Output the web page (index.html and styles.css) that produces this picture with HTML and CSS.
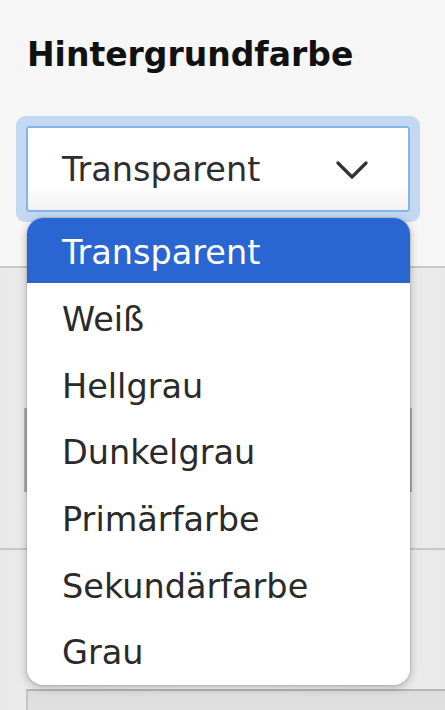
FILE: index.html
```html
<!DOCTYPE html>
<html lang="de">
<head>
<meta charset="utf-8">
<title>Hintergrundfarbe</title>
<link rel="stylesheet" href="styles.css">
</head>
<body>
<div class="page">
  <section class="top">
    <h2 class="label">Hintergrundfarbe</h2>
    <div class="select">
      <span class="select-value">Transparent</span>
      <svg class="chevron" width="32" height="20" viewBox="0 0 32 20"><path d="M2 3 L16 17 L30 3" fill="none" stroke="#333" stroke-width="3.2" stroke-linecap="round" stroke-linejoin="round"/></svg>
    </div>
  </section>
  <div class="rule"></div>
  <section class="middle">
    <div class="field"></div>
  </section>
  <div class="rule"></div>
  <section class="bottom">
    <div class="field2"></div>
  </section>
  <ul class="dropdown">
    <li class="opt active">Transparent</li>
    <li class="opt">Weiß</li>
    <li class="opt">Hellgrau</li>
    <li class="opt">Dunkelgrau</li>
    <li class="opt">Primärfarbe</li>
    <li class="opt">Sekundärfarbe</li>
    <li class="opt">Grau</li>
  </ul>
</div>
</body>
</html>
```
FILE: styles.css
```css
* { box-sizing: border-box; }
html, body { margin: 0; padding: 0; }
body {
  width: 445px;
  height: 710px;
  overflow: hidden;
  background: #eeeeee;
  font-family: "DejaVu Sans", Verdana, sans-serif;
  color: #333;
}
.page {
  position: relative;
  width: 445px;
  height: 710px;
}
.top {
  height: 266px;
  background: #f6f6f6;
  padding: 36px 0 0 27px;
}
.label {
  margin: 0;
  font-size: 33px;
  line-height: 38px;
  font-weight: bold;
  color: #111;
}
.select {
  margin: 52px 0 0 -1px;
  width: 384px;
  height: 86px;
  border: 2px solid #86b5ea;
  border-radius: 3px;
  background: linear-gradient(#ffffff 0%, #ffffff 70%, #f1f1f1 100%);
  box-shadow: 0 0 0 10px #c3d9f3;
  display: flex;
  align-items: center;
  justify-content: space-between;
  padding: 2px 40px 0 34px;
}
.select-value {
  font-size: 33.5px;
  line-height: 38px;
  color: #2e2e2e;
}
.chevron { display: block; margin-top: 0; }
.rule {
  height: 2px;
  background: #c8c8c8;
}
.middle {
  height: 280px;
  background: linear-gradient(90deg, #e9e9e9, #f1f1f1 40%, #f1f1f1 60%, #e9e9e9);
  padding-top: 140px;
}
.field {
  margin-left: 24px;
  width: 388px;
  height: 84px;
  border-left: 3px solid #b0b0b0;
  border-right: 3px solid #b0b0b0;
  background: #f4f4f4;
}
.bottom {
  height: 160px;
  background: linear-gradient(90deg, #e9e9e9, #f1f1f1 40%, #f1f1f1 60%, #e9e9e9);
  padding-top: 139px;
}
.field2 {
  margin-left: 26px;
  width: 420px;
  height: 40px;
  border-top: 2px solid #b5b5b5;
  border-left: 2px solid #c4c4c4;
  background: linear-gradient(#dcdcdc, #e6e6e6);
}
.dropdown {
  position: absolute;
  left: 27px;
  top: 218px;
  width: 383px;
  height: 467px;
  margin: 0;
  padding: 0;
  list-style: none;
  background: #fff;
  border-radius: 16px;
  overflow: hidden;
  box-shadow: 0 2px 8px rgba(0,0,0,0.28), 0 0 0 1px rgba(0,0,0,0.08);
}
.opt {
  height: 66.7px;
  display: flex;
  align-items: center;
  padding: 7px 0 0 35px;
  font-size: 33.5px;
  line-height: 38px;
  color: #2a2a2a;
}
.opt.active {
  background: #2a66d2;
  color: #fff;
  height: 65px;
  padding-top: 4px;
}
```
